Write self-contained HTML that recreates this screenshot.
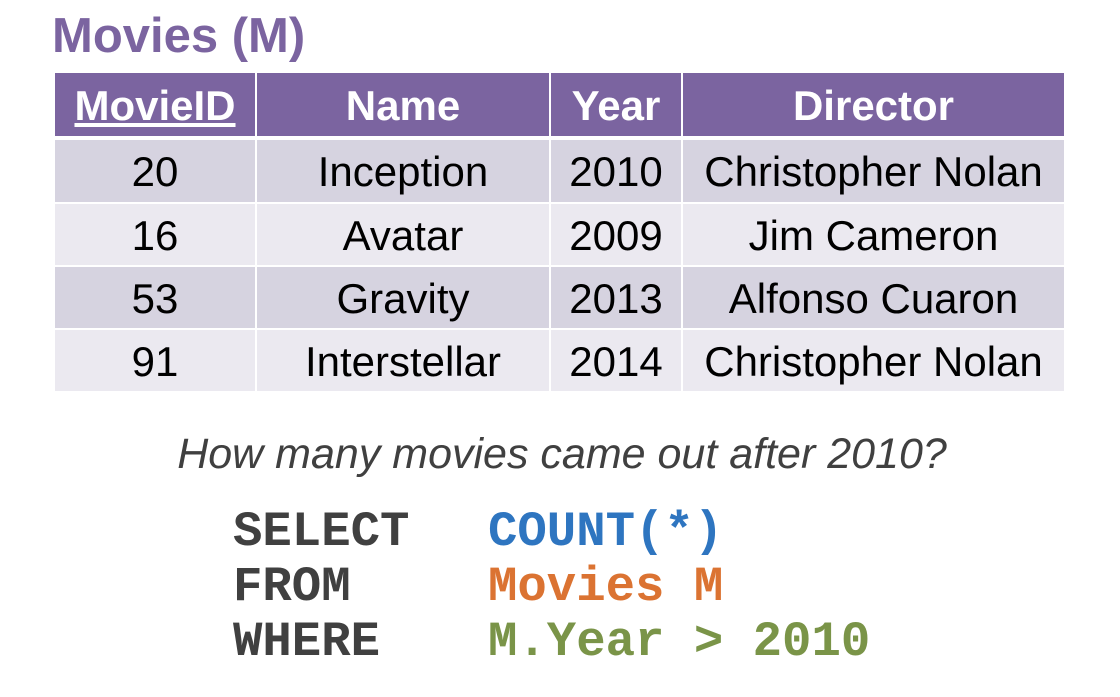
<!DOCTYPE html><html><head><style>
body{margin:0;width:1120px;height:697px;background:#fff;position:relative;font-family:"Liberation Sans",sans-serif;overflow:hidden}
.t{position:absolute;left:52px;top:8px;font-size:49px;font-weight:bold;color:#7b64a0;line-height:56px}
.c{position:absolute;display:flex;align-items:center;justify-content:center;font-size:42px;color:#000;padding-top:2px;box-sizing:border-box}
.h{background:#7b64a0;color:#fff;font-weight:bold;font-size:42px}
.q{position:absolute;left:0;width:1120px;text-align:center;top:430px;font-size:43px;font-style:italic;color:#404040;padding-left:2px}
.code{position:absolute;top:505px;font-family:"Liberation Mono",monospace;font-weight:bold;font-size:49px;line-height:55px;color:#404040;white-space:pre}
</style></head><body>
<div class="t">Movies (M)</div>
<div id="tb"></div>
<div class="q">How many movies came out after 2010?</div>
<div class="code" style="left:233px">SELECT
FROM
WHERE</div>
<div class="code" style="left:488px"><span style="color:#2e75c0">COUNT(*)</span>
<span style="color:#db7332">Movies M</span>
<span style="color:#7a9448">M.Year &gt; 2010</span></div>
<script>
var cols=[[55,200],[257,292],[551,130],[683,381]];
var rows=[[73,63],[140,62],[204,61],[267,61],[330,61]];
var data=[["<u>MovieID</u>","Name","Year","Director"],["20","Inception","2010","Christopher Nolan"],["16","Avatar","2009","Jim Cameron"],["53","Gravity","2013","Alfonso Cuaron"],["91","Interstellar","2014","Christopher Nolan"]];
var h="";
rows.forEach(function(r,i){cols.forEach(function(c,j){
var bg=i==0?"":(i%2?"background:#d6d3e0;":"background:#ebe9f0;");
h+='<div class="c'+(i==0?' h':'')+'" style="'+bg+'left:'+c[0]+'px;width:'+c[1]+'px;top:'+r[0]+'px;height:'+r[1]+'px">'+data[i][j]+'</div>';});});
document.getElementById("tb").innerHTML=h;
</script>
</body></html>
